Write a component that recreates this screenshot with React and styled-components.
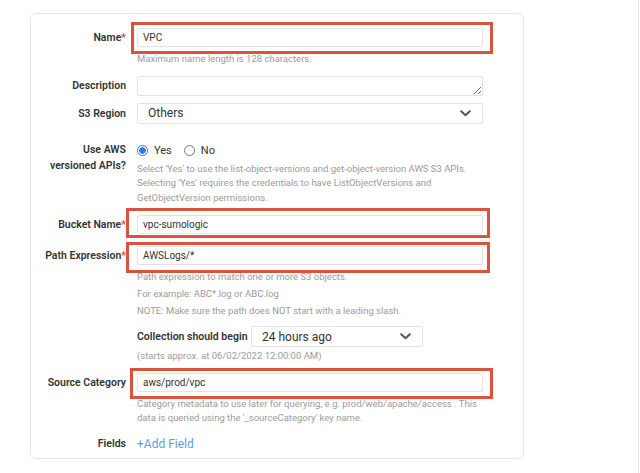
import styled, { createGlobalStyle } from "styled-components";

const GlobalStyle = createGlobalStyle`
  html, body {
    margin: 0;
    padding: 0;
    background: #ffffff;
    font-family: Roboto, "Liberation Sans", Arial, sans-serif;
  }
  * { box-sizing: border-box; }
`;

const Page = styled.div`
  width: 639px;
  min-height: 473px;
  border-right: 1px solid #e8e8e8;
  padding: 13px 0 0 30px;
`;

const Card = styled.div`
  width: 494px;
  border: 1px solid #e6e6e6;
  border-radius: 6px;
  padding: 14px 40px 6px 0;
`;

const Row = styled.div`
  display: grid;
  grid-template-columns: 95px 346px;
  column-gap: 11px;
  margin-top: ${(p) => p.$mt || 0}px;
`;

const Label = styled.div`
  text-align: right;
  font-size: 10.5px;
  font-weight: 600;
  color: #333333;
  line-height: ${(p) => p.$lh || 19}px;
`;

const Req = styled.span`
  color: #d9452f;
`;

const Control = styled.div`
  display: flex;
  flex-direction: column;
`;

// annotation box drawn over the field
const Highlight = styled.div`
  position: relative;
  &::after {
    content: "";
    position: absolute;
    inset: ${(p) => p.$inset};
    border: 3px solid #d9533d;
    pointer-events: none;
  }
`;

const Field = styled.div`
  height: 19px;
  border: 1px solid #e2e2e2;
  border-radius: 2px;
  background: #fff;
  padding: 0 5px;
  font-size: 10px;
  line-height: 17px;
  color: #333;
`;

const TextArea = styled.textarea`
  display: block;
  width: 346px;
  height: 20px;
  min-height: 20px;
  margin: 0;
  border: 1px solid #e2e2e2;
  border-radius: 2px;
  resize: vertical;
  font-family: inherit;
  font-size: 10px;
  outline: none;
`;

const Select = styled.div`
  display: flex;
  align-items: center;
  justify-content: space-between;
  width: ${(p) => p.$w || 346}px;
  height: 21px;
  border: 1px solid #e2e2e2;
  border-radius: 2px;
  padding: 0 11px 0 10px;
  font-size: 12px;
  color: #333;
`;

const Chevron = () => (
  <svg width="11" height="7" viewBox="0 0 11 7">
    <path d="M1.2 1.2 L5.5 5.3 L9.8 1.2" fill="none" stroke="#555" strokeWidth="2" strokeLinecap="round" strokeLinejoin="round" />
  </svg>
);

const Help = styled.div`
  margin-top: ${(p) => p.$mt || 0}px;
  font-size: 9.5px;
  line-height: ${(p) => p.$lh || 14.5}px;
  color: #9b9b9b;
`;

const Radios = styled.div`
  display: flex;
  align-items: center;
  height: 18px;
  font-size: 11px;
  color: #333;
`;

const RadioItem = styled.label`
  display: flex;
  align-items: center;
  gap: 6px;
  margin-right: 12px;
`;

const RadioDot = styled.span`
  width: 11px;
  height: 11px;
  border-radius: 50%;
  border: ${(p) => (p.$on ? "1.5px solid #2b7be4" : "1px solid #777")};
  background: ${(p) => (p.$on ? "radial-gradient(circle, #2b7be4 0 3px, #fff 3.5px)" : "#fff")};
`;

const Inline = styled.div`
  display: flex;
  align-items: center;
  margin-top: ${(p) => p.$mt || 0}px;
`;

const InlineLabel = styled.span`
  flex: 0 0 114px;
  font-size: 10.5px;
  font-weight: 600;
  color: #333;
  white-space: nowrap;
`;

const AddLink = styled.a`
  font-size: 12px;
  line-height: 16px;
  color: #5b9fd6;
  text-decoration: none;
`;

export default function App() {
  return (
    <>
      <GlobalStyle />
      <Page>
        <Card>
          <Row>
            <Label>Name<Req>*</Req></Label>
            <Control>
              <Highlight $inset="-6px -10px -7px -6px">
                <Field>VPC</Field>
              </Highlight>
              <Help $mt={5}>Maximum name length is 128 characters.</Help>
            </Control>
          </Row>

          <Row $mt={9}>
            <Label $lh={20}>Description</Label>
            <Control>
              <TextArea />
            </Control>
          </Row>

          <Row $mt={7}>
            <Label $lh={21}>S3 Region</Label>
            <Control>
              <Select>
                <span>Others</span>
                <Chevron />
              </Select>
            </Control>
          </Row>

          <Row $mt={18}>
            <Label $lh={16}>Use AWS<br />versioned APIs?</Label>
            <Control>
              <Radios>
                <RadioItem><RadioDot $on />Yes</RadioItem>
                <RadioItem><RadioDot />No</RadioItem>
              </Radios>
              <Help $mt={2}>
                Select 'Yes' to use the list-object-versions and get-object-version AWS S3 APIs.
                <br />
                Selecting 'Yes' requires the credentials to have ListObjectVersions and
                <br />
                GetObjectVersion permissions.
              </Help>
            </Control>
          </Row>

          <Row $mt={10}>
            <Label>Bucket Name<Req>*</Req></Label>
            <Control>
              <Highlight $inset="-7px -7px -4px -11px">
                <Field>vpc-sumologic</Field>
              </Highlight>
            </Control>
          </Row>

          <Row $mt={12}>
            <Label>Path Expression<Req>*</Req></Label>
            <Control>
              <Highlight $inset="-4px -7px -8px -11px">
                <Field>AWSLogs/*</Field>
              </Highlight>
              <Help $mt={3} $lh={17}>
                Path expression to match one or more S3 objects.
                <br />
                For example: ABC*.log or ABC.log
                <br />
                NOTE: Make sure the path does NOT start with a leading slash.
              </Help>
              <Inline $mt={7}>
                <InlineLabel>Collection should begin</InlineLabel>
                <Select $w={172}>
                  <span>24 hours ago</span>
                  <Chevron />
                </Select>
              </Inline>
              <Help $mt={2}>(starts approx. at 06/02/2022 12:00:00 AM)</Help>
            </Control>
          </Row>

          <Row $mt={9}>
            <Label>Source Category</Label>
            <Control>
              <Highlight $inset="-5px -10px -7px -7px">
                <Field>aws/prod/vpc</Field>
              </Highlight>
              <Help $mt={5} $lh={14}>
                Category metadata to use later for querying, e.g. prod/web/apache/access . This
                <br />
                data is queried using the '_sourceCategory' key name.
              </Help>
            </Control>
          </Row>

          <Row $mt={11}>
            <Label $lh={16}>Fields</Label>
            <Control>
              <AddLink href="#">+Add Field</AddLink>
            </Control>
          </Row>
        </Card>
      </Page>
    </>
  );
}
